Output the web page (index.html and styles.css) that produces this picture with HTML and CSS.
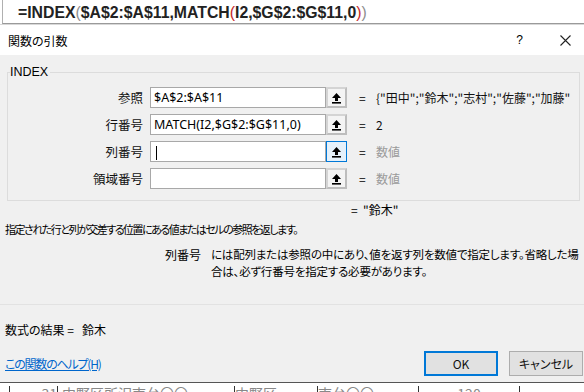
FILE: index.html
```html
<!DOCTYPE html>
<html>
<head>
	<meta charset="utf-8">
	<title>関数の引数</title>
	<link rel="stylesheet" href="styles.css">
</head>
<body>
	<div class="fbar">
		<span class="formula">=INDEX<span class="p1">(</span>$A$2:$A$11,MATCH<span class="p2">(</span>I2,$G$2:$G$11,0<span class="p2">)</span><span class="p1">)</span></span>
	</div>
	<div class="dlg">
		<div class="title">
			<span>関数の引数</span>
			<span class="tbtns"><span class="q">?</span><svg class="x" width="11" height="11" viewBox="0 0 11 11"><path d="M0.5 0.5 L10.5 10.5 M10.5 0.5 L0.5 10.5" stroke="#222" stroke-width="1.1" fill="none"/></svg></span>
		</div>
		<div class="body">
			<fieldset class="grp">
				<legend>INDEX</legend>
				<div class="row">
					<label>参照</label>
					<div class="inp">$A$2:$A$11</div>
					<div class="ref"><svg width="11" height="12" viewBox="0 0 11 12"><path d="M5.5 1 L10 6 L7 6 L7 9 L4 9 L4 6 L1 6 Z" fill="#000"/><rect x="1" y="10" width="9" height="1.6" fill="#000"/></svg></div>
					<span class="eq">=</span>
					<span class="val">{"田中";"鈴木";"志村";"佐藤";"加藤"</span>
				</div>
				<div class="row">
					<label>行番号</label>
					<div class="inp">MATCH(I2,$G$2:$G$11,0)</div>
					<div class="ref"><svg width="11" height="12" viewBox="0 0 11 12"><path d="M5.5 1 L10 6 L7 6 L7 9 L4 9 L4 6 L1 6 Z" fill="#000"/><rect x="1" y="10" width="9" height="1.6" fill="#000"/></svg></div>
					<span class="eq">=</span>
					<span class="val">2</span>
				</div>
				<div class="row">
					<label>列番号</label>
					<div class="inp"><span class="caret"></span></div>
					<div class="ref on"><svg width="11" height="12" viewBox="0 0 11 12"><path d="M5.5 1 L10 6 L7 6 L7 9 L4 9 L4 6 L1 6 Z" fill="#000"/><rect x="1" y="10" width="9" height="1.6" fill="#000"/></svg></div>
					<span class="eq">=</span>
					<span class="val dim">数値</span>
				</div>
				<div class="row">
					<label>領域番号</label>
					<div class="inp"></div>
					<div class="ref"><svg width="11" height="12" viewBox="0 0 11 12"><path d="M5.5 1 L10 6 L7 6 L7 9 L4 9 L4 6 L1 6 Z" fill="#000"/><rect x="1" y="10" width="9" height="1.6" fill="#000"/></svg></div>
					<span class="eq">=</span>
					<span class="val dim">数値</span>
				</div>
			</fieldset>
			<div class="total">= &nbsp;"鈴木"</div>
			<div class="desc">指定された行と列が交差する位置にある値またはセルの参照を返します。</div>
			<div class="arg">
				<span class="aname">列番号</span>
				<span class="atext">には配列または参照の中にあり、値を返す列を数値で指定します。省略した場合は、必ず行番号を指定する必要があります。</span>
			</div>
			<div class="sep"></div>
			<div class="result">数式の結果 = &nbsp;&nbsp;鈴木</div>
			<div class="foot">
				<a href="#" class="help">この関数のヘルプ(H)</a>
				<div class="btns">
					<button class="btn ok">OK</button>
					<button class="btn">キャンセル</button>
				</div>
			</div>
		</div>
	</div>
	<div class="sheet">
		<div class="c c1"></div>
		<div class="c c2">31</div>
		<div class="c c3">中野区所沢南台〇〇</div>
		<div class="c c4">中野区</div>
		<div class="c c5">南台〇〇</div>
		<div class="c c6">120</div>
		<div class="c c7"></div>
	</div>
</body>
</html>
```

FILE: styles.css
```css
body{
	margin: 0;
	width: 584px;
	height: 392px;
	overflow: hidden;
	background: #fff;
	font-family: "Noto Sans CJK JP", "Noto Sans", sans-serif;
	font-feature-settings: "palt";
	font-size: 12px;
	color: #000;
}
.fbar{
	height: 23px;
	border-left: 1px solid #b0b0b0;
	margin-left: 2px;
	border-bottom: 1px solid #9a9a9a;
	padding-left: 15px;
	line-height: 25px;
}
.formula{
	font-family: "Liberation Sans", sans-serif;
	font-weight: bold;
	font-size: 15.8px;
	color: #222;
}
.p1{ color: #8e8e8e; font-weight: normal; }
.p2{ color: #c62828; font-weight: normal; }

.dlg{
	border-top: 1px solid #d8d8d8;
}
.title{
	height: 30px;
	display: flex;
	align-items: center;
	justify-content: space-between;
	padding-left: 8px;
	font-size: 12px;
}
.tbtns{
	display: flex;
	align-items: center;
}
.q{
	font-family: "Liberation Sans", sans-serif;
	font-size: 12px;
	margin-right: 37px;
}
.x{
	margin-right: 13px;
}
.body{
	background: #f0f0f0;
	height: 326px;
	padding-top: 1px;
}
.grp{
	margin: 8px 4px 0 7px;
	padding: 7px 0 5px 0;
	border: 1px solid #dcdcdc;
	min-width: 0;
	overflow: hidden;
	white-space: nowrap;
}
.grp legend{
	margin-left: 2px;
	padding: 0 2px 0 0;
	font-family: "Liberation Sans", sans-serif;
	font-size: 12.5px;
	line-height: 16px;
}
.row{
	display: flex;
	align-items: center;
	height: 21px;
	margin-bottom: 6px;
}
.row label{
	width: 135px;
	text-align: right;
	padding-right: 7px;
	font-size: 12.5px;
	color: #111;
}
.inp{
	width: 171px;
	height: 19px;
	border: 1px solid #a8a8a8;
	background: #fff;
	font-family: "Noto Sans", sans-serif;
	font-size: 12.5px;
	line-height: 19px;
	padding-left: 3px;
	overflow: hidden;
}
.caret{
	display: inline-block;
	width: 1px;
	height: 14px;
	background: #000;
	vertical-align: middle;
	margin-left: 2px;
}
.ref{
	width: 17px;
	height: 17px;
	border: 2px solid #bdbdbd;
	border-left-color: #d4d4d4;
	border-top-color: #d4d4d4;
	background: #f4f4f4;
	display: flex;
	align-items: center;
	justify-content: center;
}
.ref.on{
	border: 1px solid #0078d7;
	width: 19px;
	height: 19px;
	background: #e5f1fb;
}
.eq{
	margin-left: 12px;
	width: 17px;
	font-size: 12px;
}
.val{
	font-size: 12px;
	color: #111;
}
.dim{ color: #9a9a9a; }

.total{
	margin: 1px 0 0 351px;
	font-size: 12px;
	line-height: 16px;
}
.desc{
	margin: 3px 0 0 5px;
	font-size: 11px;
	letter-spacing: -1.5px;
	line-height: 16px;
}
.arg{
	display: flex;
	margin-top: 9px;
	font-size: 12px;
	line-height: 17px;
}
.aname{
	width: 201px;
	text-align: right;
	padding-right: 10px;
	flex: none;
}
.atext{
	width: 371px;
	font-size: 11.5px;
	letter-spacing: -0.2px;
}
.sep{
	margin: 24px 0 0 0;
	border-top: 1px solid #e2e2e2;
}
.result{
	margin: 17px 0 0 5px;
	font-size: 12px;
	line-height: 16px;
}
.foot{
	display: flex;
	justify-content: space-between;
	align-items: center;
	margin-top: 13px;
	padding-left: 5px;
}
.help{
	color: #0066cc;
	font-size: 12px;
	letter-spacing: -1.2px;
	text-decoration: underline;
}
.btns{
	display: flex;
	gap: 11px;
	padding-right: 1px;
}
.btn{
	width: 74px;
	height: 25px;
	border: 1px solid #adadad;
	background: #e1e1e1;
	font-family: "Noto Sans CJK JP", sans-serif;
	font-feature-settings: "palt";
	font-size: 12px;
	color: #111;
	padding: 0;
}
.btn.ok{
	border: 2px solid #0078d7;
}

.sheet{
	display: flex;
	height: 10px;
	border-top: 1px solid #555;
	overflow: hidden;
	background: #fff;
}
.c{
	border-right: 1px solid #333;
	color: #888;
	font-size: 14px;
	line-height: 14px;
	margin-top: 3px;
	height: 20px;
	text-align: center;
	overflow: hidden;
	white-space: nowrap;
}
.c1{ width: 9px; }
.c2{ width: 47px; text-align: right; }
.c3{ width: 172px; text-align: left; padding-left: 4px; }
.c4{ width: 82px; text-align: left; }
.c5{ width: 100px; text-align: left; }
.c6{ width: 100px; }
.c7{ width: 60px; border-right: 0; }
```
